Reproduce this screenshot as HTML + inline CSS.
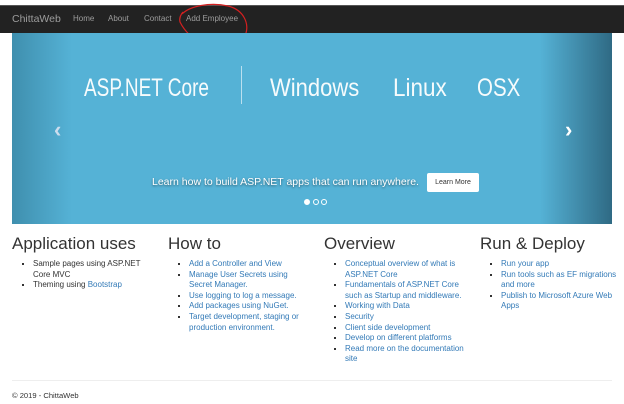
<!DOCTYPE html>
<html><head><meta charset="utf-8"><style>
*{margin:0;padding:0;box-sizing:border-box}
body{width:624px;height:404px;background:#fff;font-family:"Liberation Sans",sans-serif;position:relative;overflow:hidden;color:#333}
.nav{position:absolute;left:0;top:5px;width:624px;height:28px;background:#222;border-top:1px solid #555}
.nav span{position:absolute;top:8px;font-size:8px;color:#9d9d9d}
.brand{left:12px;font-size:10.5px!important;top:7px!important;color:#9d9d9d}
.car{position:absolute;left:12px;top:33px;width:600px;height:191px;background:linear-gradient(90deg,#3f8fae 0%,#55b2d6 10%,#55b2d6 88%,#2f6a84 100%)}
.t{position:absolute;color:#fff;font-size:25px;top:40px;line-height:30px;transform:scaleX(.76);transform-origin:left top;white-space:nowrap;opacity:.95}
.cap{position:absolute;top:176px;left:152px;color:#fff;font-size:10.5px;text-shadow:0 1px 2px rgba(0,0,0,.5)}
.btn{position:absolute;left:427px;top:173px;width:52px;height:19px;background:#fff;border-radius:2px;font-size:7px;color:#333;text-align:center;line-height:19px}
.dot{position:absolute;top:199px;width:6px;height:6px;border:1px solid #fff;border-radius:50%}
.col{position:absolute;top:234px;width:144px}
.col h2{font-size:17px;font-weight:normal;color:#333;margin-bottom:5px}
.col ul{padding-left:21px;font-size:8px;line-height:10.6px}
.col li{list-style:square;color:#333}
a{color:#337ab7;text-decoration:none}
.hr{position:absolute;left:12px;top:380px;width:600px;border-top:1px solid #eee}
.foot{position:absolute;left:12px;top:391px;font-size:7.6px}
</style></head><body>
<div class="nav">
<span class="brand">ChittaWeb</span>
<span style="left:73px">Home</span>
<span style="left:108px">About</span>
<span style="left:144px">Contact</span>
<span style="left:186px">Add Employee</span>
</div>
<svg style="position:absolute;left:0;top:0" width="624" height="60"><path d="M182 14 C190 6,210 2,228 6 C244 10,250 24,245 36 C240 46,222 48,206 44 C192 40,184 30,180 22 C179 18,181 14,183 12" fill="none" stroke="#d42020" stroke-width="1.2"/></svg>
<div class="car">
<div class="t" style="left:72px">ASP.NET Core</div>
<div style="position:absolute;left:229px;top:33px;width:1px;height:38px;background:rgba(255,255,255,.6)"></div>
<div class="t" style="left:258px;transform:scaleX(.88)">Windows</div>
<div class="t" style="left:381px;transform:scaleX(.9)">Linux</div>
<div class="t" style="left:465px;transform:scaleX(.82)">OSX</div>
<div style="position:absolute;left:42px;top:84px;color:#cde;font-size:22px;font-weight:bold">‹</div>
<div style="position:absolute;left:553px;top:84px;color:#fff;font-size:22px;font-weight:bold">›</div>
</div>
<div class="cap">Learn how to build ASP.NET apps that can run anywhere.</div>
<div class="btn">Learn More</div>
<div class="dot" style="left:304px;background:#fff"></div>
<div class="dot" style="left:313px"></div>
<div class="dot" style="left:321px"></div>
<div class="col" style="left:12px"><h2>Application uses</h2><ul><li>Sample pages using ASP.NET<br>Core MVC</li><li>Theming using <a>Bootstrap</a></li></ul></div>
<div class="col" style="left:168px"><h2>How to</h2><ul><li><a>Add a Controller and View</a></li><li><a>Manage User Secrets using Secret Manager.</a></li><li><a>Use logging to log a message.</a></li><li><a>Add packages using NuGet.</a></li><li><a>Target development, staging or production environment.</a></li></ul></div>
<div class="col" style="left:324px"><h2>Overview</h2><ul><li><a>Conceptual overview of what is ASP.NET Core</a></li><li><a>Fundamentals of ASP.NET Core such as Startup and middleware.</a></li><li><a>Working with Data</a></li><li><a>Security</a></li><li><a>Client side development</a></li><li><a>Develop on different platforms</a></li><li><a>Read more on the documentation site</a></li></ul></div>
<div class="col" style="left:480px"><h2>Run &amp; Deploy</h2><ul><li><a>Run your app</a></li><li><a>Run tools such as EF migrations and more</a></li><li><a>Publish to Microsoft Azure Web Apps</a></li></ul></div>
<div class="hr"></div>
<div class="foot">© 2019 - ChittaWeb</div>
</body></html>
